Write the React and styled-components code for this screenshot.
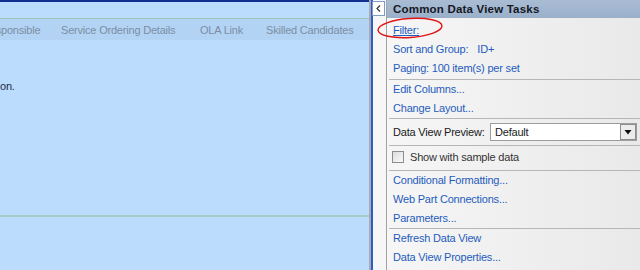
import React from 'react';
import styled, { createGlobalStyle } from 'styled-components';

const GlobalStyle = createGlobalStyle`
  html, body {
    margin: 0;
    padding: 0;
    background: #ffffff;
  }
  body {
    font-family: "Liberation Sans", Arial, sans-serif;
    font-size: 11px;
    letter-spacing: -0.2px;
  }
`;

// 전체 화면
const Screen = styled.div`
  position: relative;
  display: flex;
  width: 640px;
  height: 270px;
  overflow: hidden;
`;

// 왼쪽 디자인 영역
const DesignPane = styled.div`
  width: 369px;
  flex-shrink: 0;
  display: flex;
  flex-direction: column;
  background: #bcdcfd;
  border-top: 2px solid #12308e;
`;

const HeaderRow = styled.div`
  margin-top: 16px;
  height: 21px;
  display: flex;
  align-items: center;
  border-top: 1px solid #9fc6bd;
  background: #b2d3f4;
  overflow: hidden;
  white-space: nowrap;
  color: #7c8ea3;
`;

const HeaderCell = styled.div`
  flex-shrink: 0;
  width: ${p => p.$w}px;
  margin-left: ${p => p.$offset || 0}px;
`;

const Message = styled.div`
  margin-top: 40px;
  height: 12px;
  line-height: 12px;
  color: #1c2b4c;
`;

const RowLine = styled.div`
  margin-top: 123px;
  height: 2px;
  background: #a5cec6;
`;

// 분할선
const SplitBorder = styled.div`
  width: 2px;
  flex-shrink: 0;
  background: #a9abae;
  border-right: 2px solid #2b5bd0;
`;

const Gutter = styled.div`
  width: 13px;
  flex-shrink: 0;
  background: #f6f6f6;
  border-right: 1px solid #a2a2a2;
  padding-top: 1px;
`;

const CollapseButton = styled.div`
  width: 11px;
  height: 13px;
  margin-left: -1px;
  border: 1px solid #7d9cc9;
  background: #ffffff;
  display: flex;
  align-items: center;
  justify-content: center;
`;

// 작업 패널
const TaskPanel = styled.div`
  flex: 1;
  display: flex;
  flex-direction: column;
  background: linear-gradient(to right, #f6f6f6, #e9e9e9);
`;

const PanelTitle = styled.div`
  height: 18px;
  line-height: 19px;
  padding-left: 6px;
  background: linear-gradient(#a9bcd4, #9ab0ca);
  font-size: 11.5px;
  font-weight: bold;
  color: #15181f;
  letter-spacing: 0.2px;
`;

const Group = styled.div`
  padding: ${p => p.$pad || '0'};
`;

const Separator = styled.div`
  height: 1px;
  margin-left: 2px;
  background: #b6b6b6;
`;

const TaskLink = styled.div`
  height: 19px;
  line-height: 19px;
  padding-left: 6px;
  color: #1f5cbd;
  white-space: nowrap;
  text-decoration: ${p => (p.$underline ? 'underline' : 'none')};
`;

const Value = styled.span`
  margin-left: 9px;
`;

const FieldRow = styled.div`
  display: flex;
  align-items: center;
  padding-left: 6px;
  height: ${p => p.$h}px;
  padding-bottom: ${p => p.$padBottom || 0}px;
  color: #1a1a1a;
`;

const Select = styled.div`
  margin-left: auto;
  margin-right: 3px;
  width: 141px;
  height: 16px;
  display: flex;
  align-items: center;
  border: 1px solid #9c9c9c;
  background: #ffffff;
  padding-left: 4px;
`;

const SelectArrow = styled.div`
  margin-left: auto;
  width: 14px;
  height: 14px;
  border: 1px solid #8e8e8e;
  background: #ececec;
  display: flex;
  align-items: center;
  justify-content: center;
`;

const CheckBox = styled.div`
  width: 10px;
  height: 10px;
  margin-left: -1px;
  margin-right: 6px;
  border: 1px solid #8d8d8d;
  background: linear-gradient(135deg, #dcdcdc, #fafafa);
`;

const CheckLabel = styled.span`
  color: #333333;
`;

// 빨간 표시
const Annotation = styled.svg`
  position: absolute;
  left: 374px;
  top: 14px;
  width: 74px;
  height: 28px;
  pointer-events: none;
`;

function App() {
  return (
    <>
      <GlobalStyle />
      <Screen>
        <DesignPane>
          <HeaderRow>
            <HeaderCell $offset={-18} $w={79}>Responsible</HeaderCell>
            <HeaderCell $w={139}>Service Ordering Details</HeaderCell>
            <HeaderCell $w={66}>OLA Link</HeaderCell>
            <HeaderCell $w={110}>Skilled Candidates</HeaderCell>
          </HeaderRow>
          <Message>on.</Message>
          <RowLine />
        </DesignPane>
        <SplitBorder />
        <Gutter>
          <CollapseButton>
            <svg width="5" height="7" viewBox="0 0 5 7">
              <path d="M4 0.5 L1 3.5 L4 6.5" fill="none" stroke="#333" strokeWidth="1.2" />
            </svg>
          </CollapseButton>
        </Gutter>
        <TaskPanel>
          <PanelTitle>Common Data View Tasks</PanelTitle>
          <Group $pad="3px 0 1px">
            <TaskLink $underline>Filter:</TaskLink>
            <TaskLink>
              Sort and Group:<Value>ID+</Value>
            </TaskLink>
            <TaskLink>Paging: 100 item(s) per set</TaskLink>
          </Group>
          <Separator />
          <Group>
            <TaskLink>Edit Columns...</TaskLink>
            <TaskLink>Change Layout...</TaskLink>
          </Group>
          <Separator />
          <FieldRow $h={26}>
            Data View Preview:
            <Select>
              Default
              <SelectArrow>
                <svg width="8" height="5" viewBox="0 0 8 5">
                  <path d="M0.5 0 H7.5 L4 4.5 Z" fill="#111" />
                </svg>
              </SelectArrow>
            </Select>
          </FieldRow>
          <Separator />
          <FieldRow $h={22} $padBottom={2}>
            <CheckBox />
            <CheckLabel>Show with sample data</CheckLabel>
          </FieldRow>
          <Separator />
          <Group>
            <TaskLink>Conditional Formatting...</TaskLink>
            <TaskLink>Web Part Connections...</TaskLink>
            <TaskLink>Parameters...</TaskLink>
          </Group>
          <Separator />
          <Group>
            <TaskLink>Refresh Data View</TaskLink>
            <TaskLink>Data View Properties...</TaskLink>
          </Group>
        </TaskPanel>
        <Annotation viewBox="0 0 74 28">
          <ellipse
            cx="36"
            cy="14"
            rx="32"
            ry="9.5"
            transform="rotate(-4 36 14)"
            fill="none"
            stroke="#e01414"
            strokeWidth="1.4"
          />
        </Annotation>
      </Screen>
    </>
  );
}

export default App;
